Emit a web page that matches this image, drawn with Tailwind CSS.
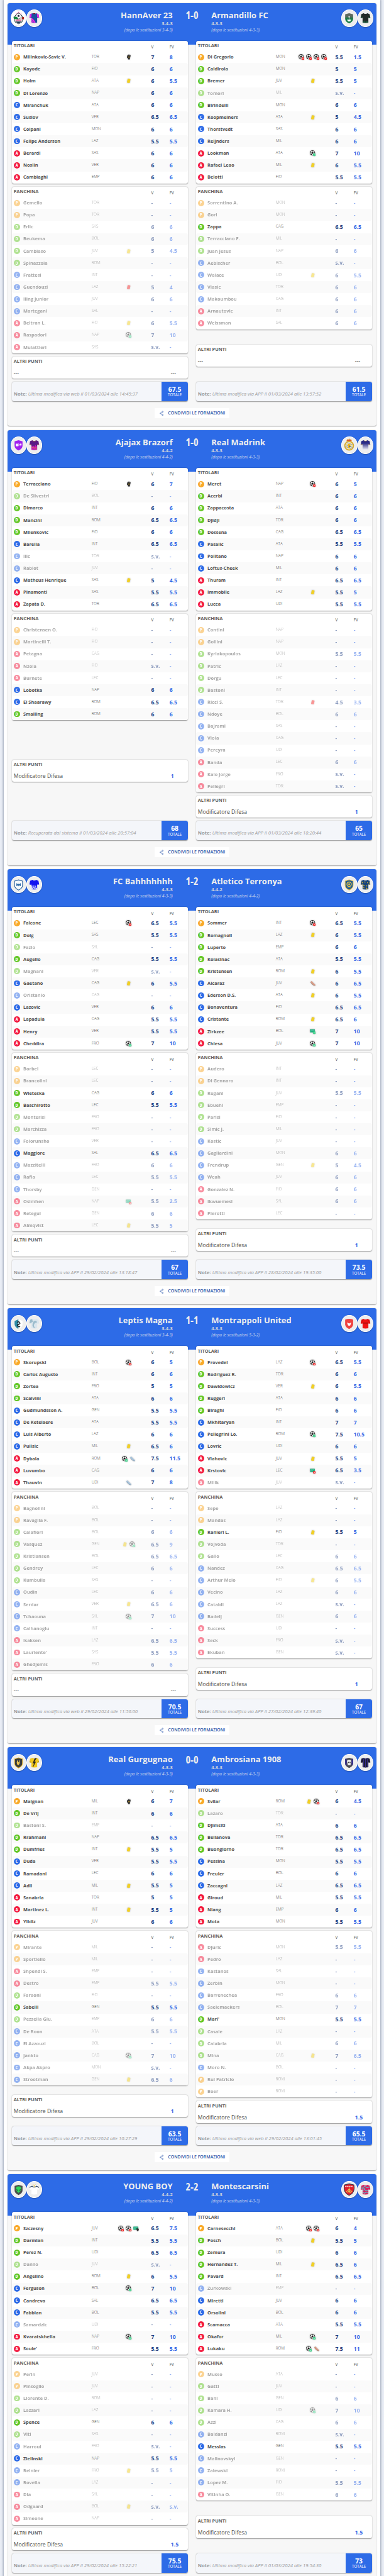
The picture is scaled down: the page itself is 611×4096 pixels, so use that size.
<!DOCTYPE html>
<html lang="it">
<head>
<meta charset="utf-8">
<title>Formazioni</title>
<script src="https://cdn.jsdelivr.net/npm/@tailwindcss/browser@4"></script>
</head>
<body class="w-[611px] h-[4096px] overflow-hidden bg-[#e9edf5] font-['Open_Sans',sans-serif] text-[#4f4f4f]">
<svg class="absolute size-0" xmlns="http://www.w3.org/2000/svg">
  <defs>
    <symbol id="ball" viewBox="0 0 20 20"><circle cx="8.7" cy="8.7" r="8" fill="#fff" stroke="#2b2b2b" stroke-width="1.3"/><path d="M8.7 5.2l3.2 2.3-1.2 3.8H6.7L5.5 7.5zM5.5 1.4l3.2 1.5 3.2-1.5-3.2-.8zM1 8l2.2-1.2.2-3.3L1.3 6zM16.4 8l-2.2-1.2-.2-3.3L16.1 6zM4 14.8l2.8-.2-1-2.6-2.9-.1zM13.4 14.8l-2.8-.2 1-2.6 2.9-.1z" fill="#222" stroke="#222" stroke-width=".8"/></symbol>
    <symbol id="ok" viewBox="0 0 20 20"><circle cx="15" cy="15" r="4.8" fill="#3fd08a"/><path d="M12.8 15l1.6 1.6 2.9-3" fill="none" stroke="#fff" stroke-width="1.2"/></symbol>
    <symbol id="ko" viewBox="0 0 20 20"><circle cx="15" cy="15" r="4.6" fill="#f02222"/><path d="M13.4 13.4l3.2 3.2m0-3.2l-3.2 3.2" stroke="#fff" stroke-width="1.3"/></symbol>
    <symbol id="net" viewBox="0 0 20 20"><path d="M.5 3h16v10.5H.5z" fill="#12a676"/><path d="M2.5 12V5.5h12V8M5 5.5v2h7v-2M2 10h8" fill="none" stroke="#8fe3c4" stroke-width=".9"/></symbol>
    <symbol id="i-G" viewBox="0 0 20 20"><use href="#ball"/><use href="#ok"/></symbol>
    <symbol id="i-x" viewBox="0 0 20 20"><use href="#ball"/><use href="#ko"/></symbol>
    <symbol id="i-B" viewBox="0 0 20 20"><use href="#net"/><use href="#ok"/></symbol>
    <symbol id="i-m" viewBox="0 0 20 20"><use href="#net"/><use href="#ko"/></symbol>
    <symbol id="i-p" viewBox="0 0 20 20"><use href="#net"/><path d="M11 9l2-1 1 3 1-4 2 .5.5 3.5 1.500 0-1 5-2 2h-3l-2-5z" fill="#333"/></symbol>
    <symbol id="i-y" viewBox="0 0 20 20"><rect x="5.200" y="3" width="9.500" height="13.500" rx="1.800" fill="#f2d024" transform="rotate(13 10 10)"/></symbol>
    <symbol id="i-r" viewBox="0 0 20 20"><rect x="5.200" y="3" width="9.500" height="13.500" rx="1.800" fill="#f43030" transform="rotate(13 10 10)"/></symbol>
    <symbol id="i-g" viewBox="0 0 20 20"><path d="M5 8L4.500 4.500 6.500 4 8 7 8 1.500h2L10.500 6l1-4.500 2 .3L13 7l1.500-4 2 .7L15.500 10l-1.500 4v4H8v-3l-4-4z" fill="#2c2c2c"/><circle cx="11" cy="10" r="2" fill="#d9b23c"/></symbol>
    <symbol id="i-a" viewBox="0 0 20 20"><path d="M2 6l3-4 3 1.500 2 3 6 5.500 3 2.500-.5 2-3 .5-5-2z" fill="#a9c4dc"/><path d="M2 6l8.500 9 5 2 3-.5" fill="none" stroke="#6b8294" stroke-width="1"/></symbol>
    <symbol id="i-b" viewBox="0 0 20 20"><path d="M2 6l3-4 3 1.500 2 3 6 5.500 3 2.500-.5 2-3 .5-5-2z" fill="#d99b86"/><path d="M2 6l8.500 9 5 2 3-.5" fill="none" stroke="#7d6a55" stroke-width="1"/></symbol>
    <symbol id="share" viewBox="0 0 16 20"><path d="M12 4L4 10l8 6" fill="none" stroke="#2a55a8" stroke-width="1.500"/><g fill="#b9c9e8" stroke="#2a55a8" stroke-width="1.100"><circle cx="12" cy="4" r="2.300"/><circle cx="4" cy="10" r="1.800"/><circle cx="12" cy="16" r="2.300"/></g></symbol>
    <path id="shirt" d="M15 7l2.500 1.500h5L25 7l6.500 2.500 2 10-4.500 1-1-3V33q-8 1.500-16 0V17.500l-1 3-4.500-1 2-10z"/>
    <clipPath id="cut"><use href="#shirt"/></clipPath>
    <path id="shield" d="M20 7l11 3v12q0 8-11 13-11-5-11-13V10z"/>
    <linearGradient id="gr" x1="0" y1="0" x2="0" y2="1"><stop offset=".3" stop-color="#2a2a86"/><stop offset=".95" stop-color="#e8e8f2"/></linearGradient>
    <linearGradient id="gg" x1="0" y1="0" x2="0" y2="1"><stop offset=".3" stop-color="#5f6b60"/><stop offset=".55" stop-color="#157a45"/></linearGradient>
  </defs>
</svg>
<main id="sheet" class="mx-[6.2px] h-[4110px] bg-white px-[6.300px] pt-[4.500px] shadow-[0_0_3px_1px_rgba(60,70,100,0.45)]"></main>

<template id="crests">
  <svg viewBox="0 0 40 40"><rect width="40" height="40" fill="#fff"/><path d="M13 5l1 2 2 0-1.500 1.500.5 2-2-1zM20 2l1.200 2.300 2.300.2-1.800 1.500.6 2.400L20 7.200l-2.300 1.200.6-2.400-1.800-1.500 2.300-.2zM27 5l1 2-1 3-1.500-1 0-2z" fill="#f58cc0"/><path d="M10 14l10-8 10 8 2 10-3 8-9 4-9-4-3-8z" fill="#dfe3da" stroke="#1f3340" stroke-width="1.500"/><circle cx="20" cy="15" r="7.500" fill="#fff" stroke="#223"/><path d="M20 11l3 2.500-1 3.500h-4l-1-3.500z" fill="#223"/><path d="M6 17q7-2 13 3v4q-6-2-12-1z" fill="#17853f"/><path d="M29 18l6-1v7l-6-1z" fill="#a22"/><path d="M12 26h16" stroke="#e67aa5" stroke-width="4"/><path d="M11 30h18l-9 5z" fill="#1f3a55"/></svg>
  <svg viewBox="0 0 40 40"><use href="#shirt" fill="#1b4fa0"/><g clip-path="url(#cut)"><path d="M4 5h9l-1 12-6 5zM36 5h-9l1 12 6 5zM12 20q8 4 12 14H11z" fill="#ee22e6"/><path d="M12 25q6 3 8 10M12 29q4 2 5 6" stroke="#1b4fa0" fill="none"/></g><path d="M17 8h6" stroke="#7a1030" stroke-width="2"/></svg>
  <svg viewBox="0 0 40 40"><use href="#shield" fill="url(#gg)"/><circle cx="20" cy="17" r="2" fill="#fff"/><path d="M20 17v8M15 25h10l-2 4h-6z" stroke="#fff" fill="#fff"/></svg>
  <svg viewBox="0 0 40 40"><use href="#shirt" fill="#222a27"/><path clip-path="url(#cut)" d="M12 27l3 3 2-4 3 5 3-4 5 3v4H12zM6 17l5-1v3l-5 2zM29 17l5 0v3l-5 1z" fill="#1b5138"/></svg>
  <svg viewBox="0 0 40 40"><use href="#shield" fill="#a020f0"/><path d="M13 17h5v6h-5zM20 16l3 3-3 4M24 17h4l-2 6" fill="#fff" stroke="#fff"/></svg>
  <svg viewBox="0 0 40 40"><use href="#shirt" fill="#5b1a86"/><path clip-path="url(#cut)" d="M12 22l3 2 2-3 3 4 3-5 5 4v11H12z" fill="#c51bb0"/><path clip-path="url(#cut)" d="M13 28l4-3 3 5 4-4 2 6M7 17l5 3M33 17l-5 3M15 8q5 4 10 0" stroke="#e0a52c" fill="none"/></svg>
  <svg viewBox="0 0 40 40"><circle cx="20" cy="22" r="12" fill="#f0e6b0" stroke="#d8a92a" stroke-width="3"/><path d="M10 19l20 8M9 24l17 6M14 13l16 7" stroke="#9aa3b5" stroke-width="2"/><path d="M13 9l2-5 3 2 2-4 2 4 3-2 2 5z" fill="#d8492f" stroke="#e2b13a"/><path d="M16 18q5-3 8 2l-2 8h-4z" fill="#f0b515"/><path d="M21 21l4 3-5 2z" fill="#2a56a8"/></svg>
  <svg viewBox="0 0 40 40"><use href="#shirt" fill="url(#gr)"/><path d="M16 8q4 3 8 0M7 17l5 2M33 17l-5 2" stroke="#e0b13c" fill="none"/></svg>
  <svg viewBox="0 0 40 40"><use href="#shield" fill="#f7fafc" stroke="#2b62a0" stroke-width="2"/><path d="M14 16l5 3 1-2 1 2 5-3v8l-5-2-1 3-1-3-5 2z" fill="#2f6caa"/></svg>
  <svg viewBox="0 0 40 40"><use href="#shirt" fill="#1212f0"/><path clip-path="url(#cut)" d="M12 23h3v3h3v-4h2v5h3v-4h2v6h3v7H12z" fill="#dfe4ff"/><path clip-path="url(#cut)" d="M13 26h2v3h3v3h3v-4h3v5M16 30h3" stroke="#1212f0" fill="none"/></svg>
  <svg viewBox="0 0 40 40"><use href="#shield" fill="#1f5b96" stroke="#e9c443" stroke-width="1.800"/><circle cx="20" cy="19" r="6" fill="none" stroke="#e9c443" stroke-width="2.500"/><circle cx="20" cy="19" r="2.500" fill="#e9c443"/><path d="M14 27h12" stroke="#e9c443"/></svg>
  <svg viewBox="0 0 40 40"><use href="#shirt" fill="#16447c"/><path clip-path="url(#cut)" d="M9 11l4 3-2 3zM17 11l3 1-1 4zM24 14l4-1-2 4zM14 20l4 2-3 3zM22 21l4 3-4 1zM13 28l4-1-1 4zM21 28l5 2-3 3zM30 13l3 2-2 4z" fill="#e8bd2c"/><path d="M7 18l5 2M33 18l-5 2" stroke="#e8bd2c"/></svg>
  <svg viewBox="0 0 40 40"><path d="M20 8l-11 5v9q1 8 11 13z" fill="#2f8aa5"/><path d="M20 8l11 5v9q-1 8-11 13z" fill="#fff"/><path d="M16 17q4-4 7 0t-3 5-2 5 6 0M17 24l7-4" stroke="#1f262b" stroke-width="2.500" fill="none"/></svg>
  <svg viewBox="0 0 40 40"><use href="#shirt" fill="#dbe6ee"/><path clip-path="url(#cut)" d="M6 10l8-3 2 8-9 5zM18 14q8-5 10 3-8 0-9 8 0 5 5 8-8-1-9-8 0-7 3-11z" fill="#9cbccc"/></svg>
  <svg viewBox="0 0 40 40"><path d="M9 9q11-4 22 0v14q-1 8-11 12-10-4-11-12z" fill="#f0413f"/><path d="M14 17l6 3 6-3-3 8-3 1-3-1z" fill="#fff"/></svg>
  <svg viewBox="0 0 40 40"><use href="#shirt" fill="#ef1212"/><path d="M12 17h16M12 20h16M13 8l-4 9M27 8l4 9" stroke="#8e0f10" stroke-width=".9"/></svg>
  <svg viewBox="0 0 40 40"><use href="#shield" fill="#3b3d3c" stroke="#edb92c" stroke-width="1.800"/><path d="M16 14l2 0 1 5h2l2-6 1 1-1 9-3 4-4-2-1-5z" fill="#edc34d"/></svg>
  <svg viewBox="0 0 40 40"><use href="#shirt" fill="#f2c81c"/><path clip-path="url(#cut)" d="M27 6l-7 12h4l-8 15 4-11h-4l6-15zM7 17l5 3M33 17l-5 3M17 8h6" fill="#222" stroke="#222" stroke-width=".8"/></svg>
  <svg viewBox="0 0 40 40"><use href="#shield" fill="#4a4a52"/><path d="M9 10l4 0v20l-4-5zM27 10l4 0v14l-4 5zM9 16h22v4H9z" fill="#37308f"/><path d="M14 17q0-5 6-5t6 5v4l-2 2v4h-8v-4l-2-2z" fill="#eee"/><path d="M16 18h3v3h-3zM21 18h3v3h-3z" fill="#333"/></svg>
  <svg viewBox="0 0 40 40"><use href="#shirt" fill="#1c1e2e"/><path clip-path="url(#cut)" d="M15 6v30M20 6v30M25 6v30M9 10l-2 10M32 10l2 10" stroke="#3a2f96" stroke-width="1.700"/></svg>
  <svg viewBox="0 0 40 40"><use href="#shield" fill="#4a514d"/><path d="M20 11q8 0 7 7-1 7-7 11-6-4-7-11-1-7 7-7z" fill="#2fd957"/><path d="M14 18l5 4-3 1zM26 18l-5 4 3 1z" fill="#143"/></svg>
  <svg viewBox="0 0 40 40"><use href="#shirt" fill="#fff"/><path d="M7 14l8-4M33 14l-8-4M14 11q6 4 12 0" stroke="#2e4460" stroke-width="2" fill="none"/><path d="M17 6l3 4 3-4M20 9v5" stroke="#e8c23a" stroke-width="1.600" fill="none"/></svg>
  <svg viewBox="0 0 40 40"><path d="M20 4l13 3q2 8 0 15-2 9-13 14Q9 31 7 22q-2-7 0-15z" fill="#e01f2c" stroke="#26344c" stroke-width="1.800"/><path d="M9 11h22" stroke="#fff" stroke-dasharray="1.500 1" stroke-width="2.500"/><path d="M20 14v16M12 26l8-8 8 8M16 29l4-8 4 8" stroke="#e4c04e" stroke-width="2" fill="none"/></svg>
  <svg viewBox="0 0 40 40"><use href="#shirt" fill="#d8205f"/><path clip-path="url(#cut)" d="M8 13l6 1 4-3 6 4 7-2M9 17l6 0M12 22l6-2 4 4 6-3M13 28l5 2 4-3 6 3M16 16l3 3" stroke="#53c7cf" stroke-width="1.800" fill="none"/></svg>
</template>

<script>
const matches = [
 { score:'1-0',
   a:{name:'HannAver 23',f:'3-4-3',s:'3-4-3',tot:'67.5',mod:'',note:'Ultima modifica via web il 01/03/2024 alle 14:45:37',
    t:`P,Milinkovic-Savic V.,TOR,g,7,8
D,Kayode,FIO,,6,6
D,Holm,ATA,y,6,5.5
D,Di Lorenzo,NAP,,6,6
C,Miranchuk,ATA,,6,6
C,Suslov,VER,,6.5,6.5
C,Colpani,MON,,6,6
C,Felipe Anderson,LAZ,,5.5,5.5
A,Berardi,SAS,,6,6
A,Noslin,VER,,6,6
A,Cambiaghi,EMP,,6,6`,
    p:`p,Gemello,TOR,,-,-
p,Popa,TOR,,-,-
d,Erlic,SAS,,6,6
d,Beukema,BOL,,6,6
d,Cambiaso,JUV,y,5,4.5
d,Spinazzola,ROM,,-,-
c,Frattesi,INT,,-,-
c,Guendouzi,LAZ,r,5,4
c,Iling Junior,JUV,,6,6
c,Martegani,SAL,,-,-
a,Beltran L.,FIO,y,6,5.5
a,Raspadori,NAP,G,7,10
a,Mulattieri,SAS,,s.v.,-`},
   b:{name:'Armandillo FC',f:'4-3-3',s:'4-3-3',tot:'61.5',mod:'',note:'Ultima modifica via APP il 01/03/2024 alle 13:57:52',
    t:`P,Di Gregorio,MON,xxxx,5.5,1.5
D,Caldirola,MON,,5,5
D,Bremer,JUV,y,5.5,5
d,Tomori,MIL,,s.v.,-
D,Birindelli,MON,,6,6
C,Koopmeiners,ATA,y,5,4.5
C,Thorstvedt,SAS,,6,6
C,Reijnders,MIL,,6,6
A,Lookman,ATA,G,7,10
A,Rafael Leao,MIL,y,6,5.5
A,Belotti,FIO,,5.5,5.5`,
    p:`p,Sorrentino A.,MON,,-,-
p,Gori,MON,,-,-
D,Zappa,CAG,,6.5,6.5
d,Terracciano F.,MIL,,-,-
d,Juan Jesus,NAP,,6,6
c,Aebischer,BOL,,s.v.,-
c,Walace,UDI,y,6,5.5
c,Vlasic,TOR,,6,6
c,Makoumbou,CAG,,6,6
a,Arnautovic,INT,,6,6
a,Weissman,SAL,,6,6`}},
 { score:'1-0',
   a:{name:'Ajajax Brazorf',f:'4-4-2',s:'4-4-2',tot:'68',mod:'1',note:'Recuperata dal sistema il 01/03/2024 alle 20:57:04',
    t:`P,Terracciano,FIO,g,6,7
d,De Silvestri,BOL,,-,-
D,Dimarco,INT,,6,6
D,Mancini,ROM,,6.5,6.5
D,Milenkovic,FIO,,6,6
C,Barella,INT,,6.5,6.5
c,Ilic,TOR,,s.v.,-
c,Rabiot,JUV,,-,-
C,Matheus Henrique,SAS,y,5,4.5
A,Pinamonti,SAS,,5.5,5.5
A,Zapata D.,TOR,,6.5,6.5`,
    p:`p,Christensen O.,FIO,,-,-
p,Martinelli T.,FIO,,-,-
a,Petagna,CAG,,-,-
a,Nzola,FIO,,s.v.,-
a,Burnete,LEC,,-,-
C,Lobotka,NAP,,6,6
C,El Shaarawy,ROM,,6.5,6.5
D,Smalling,ROM,,6,6`},
   b:{name:'Real Madrink',f:'4-3-3',s:'4-3-3',tot:'65',mod:'1',note:'Ultima modifica via APP il 01/03/2024 alle 18:20:44',
    t:`P,Meret,NAP,x,6,5
D,Acerbi,INT,,6,6
D,Zappacosta,ATA,,6,6
D,Djidji,TOR,,6,6
D,Dossena,CAG,,6.5,6.5
C,Pasalic,ATA,,5.5,5.5
C,Politano,NAP,,6,6
C,Loftus-Cheek,MIL,,6,6
A,Thuram,INT,,6.5,6.5
A,Immobile,LAZ,y,5.5,5
A,Lucca,UDI,,5.5,5.5`,
    p:`p,Contini,NAP,,-,-
p,Gollini,NAP,,-,-
d,Kyriakopoulos,MON,,5.5,5.5
d,Patric,LAZ,,-,-
d,Dorgu,LEC,,-,-
d,Bastoni,INT,,-,-
c,Ricci S.,TOR,r,4.5,3.5
c,Ndoye,BOL,,6,6
c,Bajrami,SAS,,-,-
c,Viola,CAG,,-,-
c,Pereyra,UDI,,-,-
a,Banda,LEC,,6,6
a,Kaio Jorge,FRO,,s.v.,-
a,Pellegri,TOR,,s.v.,-`}},
 { score:'1-2',
   a:{name:'FC Bahhhhhhh',f:'4-3-3',s:'4-3-3',tot:'67',mod:'',note:'Ultima modifica via APP il 29/02/2024 alle 13:18:47',
    t:`P,Falcone,LEC,x,6.5,5.5
D,Doig,SAS,,5.5,5.5
d,Fazio,SAL,,-,-
D,Augello,CAG,,5.5,5.5
d,Magnani,VER,,s.v.,-
C,Gaetano,CAG,y,6,5.5
c,Oristanio,CAG,,-,-
C,Lazovic,VER,,6,6
A,Lapadula,CAG,,5.5,5.5
A,Henry,VER,,5.5,5.5
A,Cheddira,FRO,G,7,10`,
    p:`p,Borbei,LEC,,-,-
p,Brancolini,LEC,,-,-
D,Wieteska,CAG,,6,6
D,Baschirotto,LEC,,5.5,5.5
d,Monterisi,FRO,,-,-
d,Marchizza,FRO,,-,-
c,Folorunsho,VER,,-,-
C,Maggiore,SAL,,6.5,6.5
c,Mazzitelli,FRO,,6,6
c,Rafia,LEC,,5.5,5.5
c,Thorsby,GEN,,-,-
a,Osimhen,NAP,m,5.5,2.5
a,Retegui,GEN,,6,6
a,Almqvist,LEC,y,5.5,5`},
   b:{name:'Atletico Terronya',f:'4-4-2',s:'4-4-2',tot:'73.5',mod:'1',note:'Ultima modifica via APP il 28/02/2024 alle 19:35:00',
    t:`P,Sommer,INT,x,6.5,5.5
D,Romagnoli,LAZ,y,6,5.5
D,Luperto,EMP,,6,6
D,Kolasinac,ATA,,5.5,5.5
D,Kristensen,ROM,y,6,5.5
C,Alcaraz,JUV,b,6,6.5
C,Ederson D.S.,ATA,y,6,5.5
C,Bonaventura,FIO,,6.5,6.5
C,Cristante,ROM,y,6.5,6
A,Zirkzee,BOL,B,7,10
A,Chiesa,JUV,G,7,10`,
    p:`p,Audero,INT,,-,-
p,Di Gennaro,INT,,-,-
d,Rugani,JUV,,5.5,5.5
d,Ebuehi,EMP,,-,-
d,Parisi,FIO,,-,-
d,Simic J.,MIL,,-,-
c,Kostic,JUV,,-,-
c,Gagliardini,MON,,6,6
c,Frendrup,GEN,y,5,4.5
c,Weah,JUV,,6,6
a,Gonzalez N.,FIO,,6,6
a,Ikwuemesi,SAL,,6,6
a,Pierotti,LEC,,-,-`}},
 { score:'1-1',
   a:{name:'Leptis Magna',f:'3-4-3',s:'3-4-3',tot:'70.5',mod:'',note:'Ultima modifica via web il 29/02/2024 alle 11:56:00',
    t:`P,Skorupski,BOL,x,6,5
D,Carlos Augusto,INT,,6,6
D,Zortea,FRO,,5,5
D,Scalvini,ATA,,6,6
C,Gudmundsson A.,GEN,,5.5,5.5
C,De Ketelaere,ATA,,5.5,5.5
C,Luis Alberto,LAZ,,6,6
C,Pulisic,MIL,y,6.5,6
A,Dybala,ROM,Ga,7.5,11.5
A,Luvumbo,CAG,,6,6
A,Thauvin,UDI,a,7,8`,
    p:`p,Bagnolini,BOL,,-,-
p,Ravaglia F.,BOL,,-,-
d,Calafiori,BOL,,6,6
d,Vasquez,GEN,yG,6.5,9
d,Kristiansen,BOL,,6.5,6.5
d,Gendrey,LEC,,6,6
d,Kumbulla,SAS,,-,-
c,Oudin,LEC,,6,6
c,Serdar,VER,y,6.5,6
c,Tchaouna,SAL,G,7,10
c,Calhanoglu,INT,,-,-
a,Isaksen,LAZ,,6.5,6.5
a,Lauriente',SAS,,5.5,5.5
a,Ghedjemis,FRO,,6,6`},
   b:{name:'Montrappoli United',f:'4-3-3',s:'5-3-2',tot:'67',mod:'1',note:'Ultima modifica via APP il 27/02/2024 alle 12:39:40',
    t:`P,Provedel,LAZ,x,6.5,5.5
D,Rodriguez R.,TOR,,6,6
D,Dawidowicz,VER,y,6,5.5
D,Ruggeri,ATA,,6,6
D,Biraghi,FIO,,6,6
C,Mkhitaryan,INT,,7,7
C,Pellegrini Lo.,ROM,G,7.5,10.5
C,Lovric,UDI,,6,6
A,Vlahovic,JUV,y,5.5,5
A,Krstovic,LEC,m,6.5,3.5
a,Milik,JUV,,s.v.,-`,
    p:`p,Sepe,LAZ,,-,-
p,Mandas,LAZ,,-,-
D,Ranieri L.,FIO,y,5.5,5
d,Vojvoda,TOR,,-,-
d,Gallo,LEC,,6,6
c,Nandez,CAG,,6.5,6.5
c,Arthur Melo,FIO,y,6,5.5
c,Vecino,LAZ,,6,6
c,Cataldi,LAZ,,s.v.,-
c,Badelj,GEN,,6,6
a,Success,UDI,,-,-
a,Seck,FRO,,s.v.,-
a,Ekuban,GEN,,s.v.,-`}},
 { score:'0-0',
   a:{name:'Real Gurgugnao',f:'4-3-3',s:'4-3-3',tot:'63.5',mod:'1',note:'Ultima modifica via APP il 29/02/2024 alle 10:27:29',
    t:`P,Maignan,MIL,g,6,7
D,De Vrij,INT,,6,6
d,Bastoni S.,EMP,,-,-
D,Rrahmani,NAP,,6.5,6.5
D,Dumfries,INT,y,5.5,5
C,Duda,VER,,5.5,5.5
C,Ramadani,LEC,,6,6
C,Adli,MIL,y,5.5,5
A,Sanabria,TOR,,5,5
A,Martinez L.,INT,y,5.5,5
A,Yildiz,JUV,,6,6`,
    p:`p,Mirante,MIL,,-,-
p,Sportiello,MIL,,-,-
a,Shpendi S.,EMP,,-,-
a,Destro,EMP,,5.5,5.5
d,Faraoni,FIO,,-,-
D,Sabelli,GEN,,5.5,5.5
d,Pezzella Giu.,EMP,,6,6
c,De Roon,ATA,,5.5,5.5
c,El Azzouzi,BOL,,-,-
c,Jankto,CAG,G,7,10
c,Akpa Akpro,MON,,s.v.,-
c,Strootman,GEN,y,6.5,6`},
   b:{name:'Ambrosiana 1908',f:'4-3-3',s:'4-3-3',tot:'65.5',mod:'1.5',note:'Ultima modifica via web il 29/02/2024 alle 13:01:45',
    t:`P,Svilar,ROM,yx,6,4.5
d,Lazaro,TOR,,-,-
D,Djimsiti,ATA,,6,6
D,Bellanova,TOR,,6.5,6.5
D,Buongiorno,TOR,,6.5,6.5
C,Pessina,MON,,5.5,5.5
C,Freuler,BOL,,6,6
C,Zaccagni,LAZ,,6.5,6.5
A,Giroud,MIL,,5.5,5.5
A,Niang,EMP,,6,6
A,Mota,MON,,5.5,5.5`,
    p:`a,Djuric,MON,,5.5,5.5
a,Pedro,LAZ,,-,-
c,Kastanos,SAL,,-,-
c,Zerbin,MON,,-,-
c,Barrenechea,FRO,,6,6
c,Saelemaekers,BOL,,7,7
D,Mari',MON,,5.5,5.5
d,Casale,LAZ,,-,-
d,Calabria,MIL,,6,6
d,Mina,CAG,y,7,6.5
c,Moro N.,BOL,,-,-
p,Rui Patricio,ROM,,-,-
p,Boer,ROM,,-,-`}},
 { score:'2-2',
   a:{name:'YOUNG BOY',f:'4-4-2',s:'4-4-2',tot:'75.5',mod:'1.5',note:'Ultima modifica via APP il 29/02/2024 alle 15:22:21',
    t:`P,Szczesny,JUV,xxp,6.5,7.5
D,Darmian,INT,,5.5,5.5
D,Perez N.,UDI,,6.5,6.5
d,Danilo,JUV,,s.v.,-
D,Angelino,ROM,y,6,5.5
C,Ferguson,BOL,G,7,10
C,Candreva,SAL,,6.5,6.5
C,Fabbian,BOL,,5.5,5.5
c,Samardzic,UDI,,-,-
A,Kvaratskhelia,NAP,G,7,10
A,Soule',FRO,,5.5,5.5`,
    p:`p,Perin,JUV,,-,-
p,Pinsoglio,JUV,,-,-
d,Llorente D.,ROM,,-,-
d,Lazzari,LAZ,,-,-
D,Spence,GEN,,6,6
d,Viti,SAS,,-,-
c,Harroui,FRO,,s.v.,-
C,Zielinski,NAP,,5.5,5.5
c,Reinier,FRO,y,5.5,5
c,Rovella,LAZ,,-,-
a,Dia,SAL,,-,-
a,Odgaard,BOL,y,s.v.,s.v.
a,Simeone,NAP,,-,-`},
   b:{name:'Montescarsini',f:'4-3-3',s:'4-3-3',tot:'73',mod:'1.5',note:'Ultima modifica via APP il 01/03/2024 alle 19:54:30',
    t:`P,Carnesecchi,ATA,xx,6,4
D,Posch,BOL,y,5.5,5
D,Zemura,UDI,,6,6
D,Hernandez T.,MIL,y,6.5,6
D,Pavard,INT,,6.5,6.5
c,Zurkowski,EMP,,-,-
C,Miretti,JUV,,6,6
C,Orsolini,BOL,,6,6
A,Scamacca,ATA,,5.5,5.5
A,Okafor,MIL,G,7,10
A,Lukaku,ROM,Gb,7.5,11`,
    p:`p,Musso,ATA,,-,-
d,Gatti,JUV,,-,-
d,Bani,GEN,,6,6
d,Kamara H.,UDI,G,7,10
d,Azzi,CAG,,6,6
c,Baldanzi,ROM,,s.v.,-
C,Messias,GEN,,5.5,5.5
c,Malinovskyi,GEN,,-,-
c,Zalewski,ROM,,-,-
c,Lopez M.,FIO,,5.5,5.5
a,Vitinha O.,GEN,,6,6`}}
];
const roleBg = {P:'bg-[#f9a928]',D:'bg-[#63c725]',C:'bg-[#2d6be7]',A:'bg-[#f31b3f]'};
const row = (line) => {
  const [r,n,t,ic,v,fv] = line.split(',');
  const R = r.toUpperCase();
  return `<li class="h-[19.13px] rounded-[3px] even:bg-[#fafafa]"><div class="flex h-full items-center pl-[3.100px] ${r===R?'':'opacity-50'}">
    <b class="mt-[-0.400px] flex size-[9.900px] shrink-0 items-center justify-center rounded-full text-[7.400px] font-bold leading-none text-white [font-stretch:75%] ${roleBg[R]}">${R}</b>
    <span class="w-[114.200px] shrink-0 whitespace-nowrap pl-[5.500px] text-[7.370px] font-bold leading-none">${n}</span>
    <span class="mt-[-1.200px] w-[33px] shrink-0 text-[6.350px] font-light leading-none text-[#3c3c3c]">${t}</span>
    <span class="ml-[-4px] flex w-[60px] shrink-0 justify-center gap-[2.600px]">${[...ic].map(c=>`<svg class="size-[9.500px] shrink-0 drop-shadow-[0_0_1px_rgba(0,0,0,0.3)]"><use href="#i-${c}"/></svg>`).join('')}</span>
    <span class="ml-[5.700px] w-[29.300px] shrink-0 pt-[0.500px] text-[8.600px] font-bold leading-none text-[#1c3b80]">${v}</span>
    <span class="pt-[0.500px] text-[8.600px] font-bold leading-none text-[#2f67e6]">${fv}</span>
  </div></li>`;
};
const block = (title, lines) => `<section class="rounded-[3.500px] bg-white shadow-[0_0.6px_1.5px_rgba(0,0,0,0.4)]">
  <header class="flex h-[16.660px] text-[6.400px]"><h3 class="w-[217px] pl-[3.100px] pt-[3.500px] text-[7.400px] font-bold leading-[9.500px] text-[#5e5e5e]">${title}</h3><span class="w-[29.300px] pl-[4.800px] pt-[5.700px] leading-[9px]">V</span><span class="pl-[4.800px] pt-[5.700px] leading-[9px]">FV</span></header>
  <ul>${lines.split('\n').map(row).join('')}</ul></section>`;
const column = (s) => `<div class="flex w-[281px] flex-col justify-between">
  <div class="flex flex-col gap-[4.940px]">${block('TITOLARI',s.t)}${block('PANCHINA',s.p)}</div>
  <section class="h-[35.200px] rounded-[3.500px] bg-white pl-[3.100px] shadow-[0_0.6px_1.5px_rgba(0,0,0,0.4)]"><h3 class="pt-[3.400px] text-[7.400px] font-bold leading-[9.500px] text-[#5e5e5e]">ALTRI PUNTI</h3>
    <div class="mt-[7.500px] flex text-[8.640px] leading-[12px]"><span class="w-[250.100px] ${s.mod?'':'text-[#444]'}">${s.mod?'Modificatore Difesa':'---'}</span>${s.mod?`<b class="text-[#2f67e6]">${s.mod}</b>`:'<span class="text-[#444]">---</span>'}</div></section>
  <footer class="flex h-[30.850px] overflow-hidden rounded-[3.500px] bg-[#f4f6fa] shadow-[0_0.6px_1.5px_rgba(0,0,0,0.4)]"><p class="flex-1 whitespace-nowrap pl-[3.100px] pt-[14.200px] text-[7.690px] leading-[11px] text-[#9b9b9b]"><b>Note:</b> <i>${s.note}</i></p>
    <div class="w-[42.600px] bg-[#2d6be7] pt-[7px] text-center text-white"><b class="block text-[10.400px] leading-[10.400px]">${s.tot}</b><span class="block text-[6.200px] leading-[7px]">TOTALE</span></div></footer>
</div>`;
const crest = (i) => `<span class="block h-[27.200px] w-[25.500px] overflow-hidden rounded-[50%] border-[1.300px] border-white bg-[#eee] shadow-[0_0.6px_1.5px_rgba(0,0,0,0.35)]" data-crest="${i}"></span>`;
document.getElementById('sheet').innerHTML = matches.map((m,i) => `<article class="mb-[6.100px] rounded-[3.500px] bg-[#f7f7f7] shadow-[0_0.6px_1.5px_rgba(0,0,0,0.4)]">
  <header class="flex h-[66.300px] rounded-t-[3.500px] bg-[#2d6be7] text-[#eeeeee]">
    <div class="flex w-[55px] pl-[4.900px] pt-[10.900px]">${crest(i*4)}${crest(i*4+1)}</div>
    <div class="w-[207.200px] pt-[11.200px] text-right"><h2 class="text-[12.950px] font-bold leading-[16px]">${m.a.name}</h2><p class="text-[7.400px] font-bold leading-[11px] text-[#d2d4da]">${m.a.f}</p><p class="text-[6.600px] italic leading-[9px] text-[#cdd6ec]">(dopo le sostituzioni ${m.a.s})</p></div>
    <div class="w-[61.600px] pt-[11.400px] text-center text-[16.200px] font-bold leading-[16px] [font-stretch:75%]">${m.score}</div>
    <div class="w-[207.200px] pt-[11.200px]"><h2 class="text-[12.950px] font-bold leading-[16px]">${m.b.name}</h2><p class="text-[7.400px] font-bold leading-[11px] text-[#d2d4da]">${m.b.f}</p><p class="text-[6.600px] italic leading-[9px] text-[#cdd6ec]">(dopo le sostituzioni ${m.b.s})</p></div>
    <div class="flex w-[55px] justify-end pr-[4.900px] pt-[10.900px]">${crest(i*4+2)}${crest(i*4+3)}</div>
  </header>
  <div class="mt-[-6.200px] flex gap-[12.200px] px-[6.100px] ${m.a.p.split('\n').length===14||m.b.p.split('\n').length===14?'h-[592.400px]':'h-[573.270px]'}">${column(m.a)}${column(m.b)}</div>
  <div class="flex h-[39.600px] justify-center pt-[10.900px]"><button class="flex h-[16px] w-[118.400px] items-center rounded-[1px] bg-white pl-[6.900px] text-[6.950px] font-semibold text-[#2a509f]"><svg class="h-[8.500px] w-[8px]"><use href="#share"/></svg><span class="ml-[6.100px] whitespace-nowrap">CONDIVIDI LE FORMAZIONI</span></button></div>
</article>`).join('');
const art = document.getElementById('crests').content.querySelectorAll('svg');
document.querySelectorAll('[data-crest]').forEach(el => { const s = art[+el.dataset.crest]; s.classList.add('size-full'); el.append(s); });
</script>
</body>
</html>
